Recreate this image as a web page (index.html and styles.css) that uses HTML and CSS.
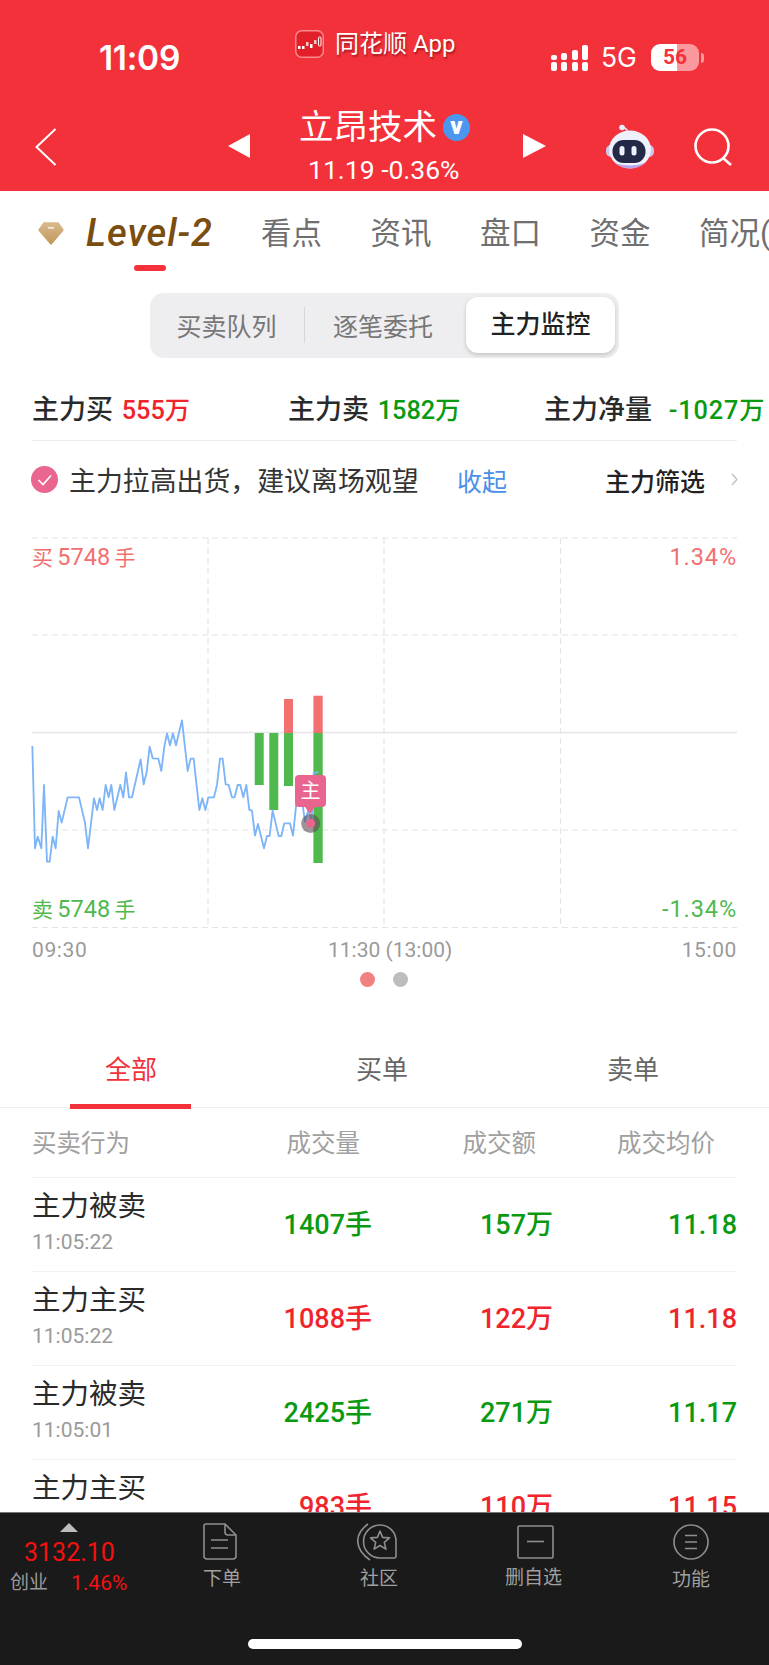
FILE: index.html
```html
<!DOCTYPE html>
<html lang="zh-CN">
<head>
  <meta charset="UTF-8" />
  <title>立昂技术</title>
  <link rel="stylesheet" href="styles.css">
</head>
<body>
  <div class="phone">
    <header class="top">
      <div class="status">
        <span class="time">11:09</span>
        <div class="app">
          <svg class="app-icon" width="29" height="28" viewBox="0 0 29 28">
            <rect x="0.75" y="0.75" width="27.5" height="26.5" rx="6" fill="#e3202a" stroke="#f98a8a" stroke-width="1.5"/>
            <rect x="3" y="16" width="2.5" height="3" fill="#fff"/>
            <rect x="7" y="16" width="2.5" height="3" fill="#fff"/>
            <rect x="11" y="12" width="2.5" height="4" fill="#f8c7c7"/>
            <rect x="15" y="14" width="2.5" height="4" fill="#fff"/>
            <rect x="19" y="10" width="2.5" height="4" fill="#f8c7c7"/>
            <rect x="23.5" y="7" width="2.5" height="9" rx="1" fill="none" stroke="#fff"/>
          </svg>
          <span class="app-name">同花顺 App</span>
        </div>
        <div class="status-right">
          <svg width="37" height="26" viewBox="0 0 37 26" fill="#fff">
            <rect x="0" y="17" width="6" height="9" rx="2"/>
            <rect x="0" y="10" width="6" height="5" rx="2"/>
            <rect x="10" y="17" width="6" height="9" rx="2"/>
            <rect x="10" y="8" width="6" height="7" rx="2"/>
            <rect x="21" y="17" width="6" height="9" rx="2"/>
            <rect x="21" y="5" width="6" height="10" rx="2"/>
            <rect x="31" y="17" width="6" height="9" rx="2"/>
            <rect x="31" y="0" width="6" height="15" rx="2"/>
          </svg>
          <span class="net">5G</span>
          <span class="battery">56</span>
          <span class="battery-tip"></span>
        </div>
      </div>
      <nav class="nav">
        <svg class="back" width="22" height="38" viewBox="0 0 22 38"><path d="M20.5 1 L1.5 19 L20.5 37" fill="none" stroke="#fff" stroke-width="2"/></svg>
        <span class="tri tri-left"></span>
        <div class="stock">
          <div class="stock-name">立昂技术<span class="verified">v</span></div>
          <div class="stock-price">11.19 -0.36%</div>
        </div>
        <span class="tri tri-right"></span>
        <svg class="robot" width="48" height="46" viewBox="0 0 48 46">
          <path d="M16 4 Q20 3 22 8" fill="none" stroke="#e4e4f8" stroke-width="1.6"/>
          <circle cx="16" cy="3.500" r="2.800" fill="#eeeefb"/>
          <rect x="0" y="21" width="48" height="12" rx="5" fill="#c9c8ee"/>
          <ellipse cx="24" cy="25.500" rx="21" ry="19" fill="#eef0fc"/>
          <path d="M9 39 Q24 50 39 39 Q24 44 9 39 Z" fill="#b9a2ec"/>
          <rect x="6.500" y="16" width="33" height="23" rx="11" fill="#232a48"/>
          <rect x="13.500" y="22" width="5" height="9.500" rx="2.500" fill="#eef0ff"/>
          <rect x="25.500" y="22" width="5" height="9.500" rx="2.500" fill="#eef0ff"/>
        </svg>
        <svg class="search" width="39" height="38" viewBox="0 0 39 38">
          <circle cx="18" cy="18" r="16.500" fill="none" stroke="#fff" stroke-width="2.600"/>
          <path d="M29 30 L37 37" stroke="#fff" stroke-width="2.600"/>
        </svg>
      </nav>
    </header>

    <main class="content">
      <div class="level-tabs">
        <div class="level-tab">
          <svg class="gem" width="26" height="23" viewBox="0 0 26 23">
            <defs>
              <linearGradient id="gemFill" x1="0" y1="0" x2="0" y2="1">
                <stop offset="0" stop-color="#d8b88c"/>
                <stop offset="1" stop-color="#c2975b"/>
              </linearGradient>
            </defs>
            <path d="M6 1 H20 L25 8 L13 22 L1 8 Z" fill="url(#gemFill)" stroke="url(#gemFill)" stroke-width="1.500" stroke-linejoin="round"/>
            <rect x="10" y="5" width="6" height="1.600" fill="#f8eedf"/>
          </svg>
          <span class="level-name">Level-2</span>
          <span class="level-mark"></span>
        </div>
        <span class="tab">看点</span>
        <span class="tab">资讯</span>
        <span class="tab">盘口</span>
        <span class="tab">资金</span>
        <span class="tab">简况(</span>
      </div>

      <div class="segment-wrap">
        <div class="segment">
          <span class="seg-item seg-first">买卖队列</span>
          <span class="seg-line"></span>
          <span class="seg-item seg-second">逐笔委托</span>
          <span class="seg-item seg-active">主力监控</span>
        </div>
      </div>

      <div class="stats">
        <div class="stat stat-buy">主力买 <b class="up">555万</b></div>
        <div class="stat stat-sell">主力卖 <b class="down">1582万</b></div>
        <div class="stat stat-net">主力净量 <b class="down">-1027万</b></div>
      </div>

      <div class="advice">
        <svg class="check" width="27" height="27" viewBox="0 0 27 27">
          <circle cx="13.5" cy="13.5" r="13.5" fill="#e9668f"/>
          <path d="M7.5 14 L12 18.5 L20 9.5" fill="none" stroke="#fff" stroke-width="1.6"/>
        </svg>
        <span class="advice-text">主力拉高出货，建议离场观望</span>
        <span class="collapse">收起</span>
        <span class="filter">主力筛选</span>
        <svg class="chev" width="7" height="13" viewBox="0 0 7 13"><path d="M1 1 L6 6.5 L1 12" fill="none" stroke="#bbb" stroke-width="1.2"/></svg>
      </div>

      <div class="chart">
        <svg class="chart-svg" width="769" height="412" viewBox="0 520 769 412">
          <g stroke="#e4e4e4" stroke-width="1.2" stroke-dasharray="6 4" fill="none">
            <path d="M32 538 H737"/>
            <path d="M32 635 H737"/>
            <path d="M32 830 H737"/>
            <path d="M32 927.5 H737"/>
            <path d="M208 538 V927"/>
            <path d="M384 538 V927"/>
            <path d="M560.500 538 V927"/>
          </g>
          <path d="M32 732.500 H737" stroke="#e6e6e6" stroke-width="1.5"/>
          <g fill="#4fb94e">
            <rect x="254.700" y="733" width="9" height="52"/>
            <rect x="269.300" y="733" width="9" height="77"/>
            <rect x="284" y="733" width="9" height="53"/>
            <rect x="313.400" y="733" width="9.300" height="130"/>
          </g>
          <g fill="#f37070">
            <rect x="284" y="699" width="9" height="34"/>
            <rect x="313.400" y="695.700" width="9.300" height="37.300"/>
          </g>
          <polyline transform="translate(0 520) scale(0.3333)" fill="none" stroke="#7db5f8" stroke-width="5.5" stroke-linejoin="round" points="97,678 105,985 113,950 124,985 132,795 141,1025 149,1025 158,950 167,985 176,873 185,908 203,832 237,832 255,908 264,985 282,835 291,870 299,835 308,870 317,795 326,832 334,795 343,870 361,795 370,832 378,757 387,832 396,832 422,718 431,793 440,757 449,680 458,715 475,716 484,753 493,680 501,640 510,676 519,640 528,676 546,601 563,753 572,716 581,716 598,870 607,835 616,870 625,832 642,832 651,795 660,716 668,716 677,793 686,795 696,832 704,832 713,795 721,795 730,832 739,795 748,870 756,872 765,947 774,912 792,985 801,948 809,948 818,872 836,948 844,948 853,910 870,910 879,947 888,860 893,832 905,832 915,905 925,870 935,905 941,760 955,755"/>
          <circle cx="310.700" cy="823.500" r="9.500" fill="#5d4c50" fill-opacity="0.6"/>
          <circle cx="310.700" cy="823.500" r="4.500" fill="#e9648f"/>
        </svg>
        <span class="chart-label label-tl"><i>买</i> 5748 <i>手</i></span>
        <span class="chart-label label-tr">1.34%</span>
        <span class="chart-label label-bl"><i>卖</i> 5748 <i>手</i></span>
        <span class="chart-label label-br">-1.34%</span>
        <span class="pin">主</span>
      </div>

      <div class="axis">
        <span class="axis-end">09:30</span>
        <span class="axis-mid">11:30 (13:00)</span>
        <span class="axis-end">15:00</span>
      </div>
      <div class="dots"><span class="dot dot-on"></span><span class="dot"></span></div>

      <div class="sub-tabs">
        <span class="sub-tab sub-on">全部</span>
        <span class="sub-tab">买单</span>
        <span class="sub-tab">卖单</span>
      </div>

      <div class="list">
        <div class="list-head">
          <span>买卖行为</span>
          <span class="head-cell head-vol">成交量</span>
          <span class="head-cell head-amt">成交额</span>
          <span class="head-cell head-price">成交均价</span>
        </div>
        <div class="list-row">
          <div><div class="act">主力被卖</div><div class="when">11:05:22</div></div>
          <span class="num down">1407手</span><span class="num down">157万</span><span class="num down">11.18</span>
        </div>
        <div class="list-row">
          <div><div class="act">主力主买</div><div class="when">11:05:22</div></div>
          <span class="num up">1088手</span><span class="num up">122万</span><span class="num up">11.18</span>
        </div>
        <div class="list-row">
          <div><div class="act">主力被卖</div><div class="when">11:05:01</div></div>
          <span class="num down">2425手</span><span class="num down">271万</span><span class="num down">11.17</span>
        </div>
        <div class="list-row">
          <div><div class="act">主力主买</div><div class="when"></div></div>
          <span class="num up">983手</span><span class="num up">110万</span><span class="num up">11.15</span>
        </div>
      </div>
    </main>

    <footer class="bottom">
      <div class="bottom-bar">
        <div class="index">
          <span class="index-tri"></span>
          <div class="index-value">3132.10</div>
          <div class="index-line"><span class="index-name">创业</span><span class="index-pct">1.46%</span></div>
        </div>
        <div class="action action-order">
          <svg width="34" height="37" viewBox="0 0 34 37" fill="none" stroke="#8e8e8e" stroke-width="1.600">
            <path d="M3 1 H22 L33 12 V33 Q33 36 30 36 H4 Q1 36 1 33 V3 Q1 1 3 1 Z"/>
            <path d="M22 1 V9 Q22 12 25 12 H33"/>
            <path d="M8 17 H25 M8 25 H25"/>
          </svg>
          <span>下单</span>
        </div>
        <div class="action action-social">
          <svg width="40" height="38" viewBox="0 0 40 38" fill="none" stroke="#8e8e8e" stroke-width="1.600">
            <path d="M11 1 C-3 11 -3 26 13 37"/>
            <path d="M23 2 A16 16 0 0 1 39 18 V33 Q39 35 37 35 H23 A16.500 16.500 0 0 1 23 2 Z"/>
            <path d="M23 8 L25.600 14.400 L32.500 14.900 L27.300 19.400 L28.900 26.100 L23 22.500 L17.100 26.100 L18.700 19.400 L13.500 14.900 L20.400 14.400 Z" stroke-linejoin="round"/>
          </svg>
          <span>社区</span>
        </div>
        <div class="action action-del">
          <svg width="37" height="34" viewBox="0 0 37 34" fill="none" stroke="#8e8e8e" stroke-width="1.600">
            <rect x="1" y="1" width="35" height="32" rx="1.500"/>
            <path d="M10 16.500 H27"/>
          </svg>
          <span>删自选</span>
        </div>
        <div class="action action-more">
          <svg width="36" height="36" viewBox="0 0 36 36" fill="none" stroke="#8e8e8e" stroke-width="1.600">
            <circle cx="18" cy="18" r="17"/>
            <path d="M12 11.500 H24 M12 18 H24 M12 24.500 H24"/>
          </svg>
          <span>功能</span>
        </div>
      </div>
      <div class="home-bar"></div>
    </footer>
  </div>
</body>
</html>
```

FILE: styles.css
```css
* {
  box-sizing: border-box;
}
html, body {
  margin: 0;
  padding: 0;
  background: #fff;
}
body {
  font-family: Roboto, "Noto Sans CJK SC", sans-serif;
  color: #333;
}
.phone {
  width: 769px;
  height: 1665px;
  display: flex;
  flex-direction: column;
  overflow: hidden;
}
.up {
  color: #f0242c;
}
.down {
  color: #0a9a12;
}

/* red header */
.top {
  height: 191px;
  background: #f3313b;
  color: #fff;
  flex: none;
}
.status {
  height: 100px;
  display: flex;
  align-items: flex-start;
  padding-left: 99px;
}
.time {
  width: 196px;
  margin-top: 39px;
  font-family: Inter, sans-serif;
  font-size: 33.500px;
  line-height: 38px;
  font-weight: 600;
  letter-spacing: -.3px;
}
.app {
  width: 256px;
  margin-top: 30px;
  display: flex;
  align-items: center;
  gap: 11px;
}
.app-name {
  font-size: 24px;
  line-height: 28px;
  text-shadow: 1px 2px 2px rgba(90, 0, 0, .5);
}
.status-right {
  margin-top: 44px;
  display: flex;
  align-items: center;
}
.net {
  margin-left: 13px;
  width: 50px;
  font-family: Inter, sans-serif;
  font-size: 26.500px;
  line-height: 27px;
}
.battery {
  width: 48px;
  height: 27px;
  border-radius: 9px;
  background: linear-gradient(90deg, #fff 54%, rgba(255, 255, 255, .5) 54%);
  color: #f3313b;
  font-size: 21px;
  font-weight: 700;
  line-height: 27px;
  text-align: center;
}
.battery-tip {
  width: 3px;
  height: 10px;
  margin-left: 2px;
  border-radius: 0 3px 3px 0;
  background: rgba(255, 255, 255, .5);
}
.nav {
  height: 91px;
  display: flex;
  align-items: flex-start;
  padding-left: 35px;
}
.back {
  margin-top: 28px;
}
.tri {
  width: 0;
  height: 0;
  margin-top: 34px;
  border-top: 12.5px solid transparent;
  border-bottom: 12.5px solid transparent;
}
.tri-left {
  margin-left: 171px;
  border-right: 22px solid #fff;
}
.tri-right {
  border-left: 23px solid #fff;
}
.stock {
  width: 273px;
  padding-left: 49px;
}
.stock-name {
  display: flex;
  align-items: center;
  height: 46px;
  margin-top: 4px;
  font-size: 34.500px;
  line-height: 46px;
}
.verified {
  width: 27px;
  height: 27px;
  margin-left: 6px;
  border-radius: 50%;
  background: #4b97f0;
  font-size: 24px;
  font-weight: 900;
  line-height: 24px;
  text-align: center;
}
.stock-price {
  margin-top: 5px;
  margin-left: 9px;
  font-size: 26.500px;
  line-height: 30px;
}
.robot {
  margin-left: 60px;
  margin-top: 24px;
}
.search {
  margin-left: 40px;
  margin-top: 28px;
}

.content {
  flex: 1;
  min-height: 0;
  overflow: hidden;
}

/* level tabs */
.level-tabs {
  height: 80px;
  display: flex;
  align-items: flex-start;
  white-space: nowrap;
}
.level-tab {
  position: relative;
  flex: none;
  width: 261px;
  height: 80px;
  padding: 20px 0 0 38px;
  display: flex;
  align-items: flex-start;
}
.gem {
  margin-top: 11px;
}
.level-name {
  margin-left: 22px;
  font-family: Roboto, sans-serif;
  font-size: 38px;
  font-style: italic;
  font-weight: 500;
  letter-spacing: 1px;
  line-height: 44px;
  color: #7a4d10;
}
.level-mark {
  position: absolute;
  left: 134px;
  top: 74px;
  width: 32px;
  height: 6px;
  border-radius: 3px;
  background: #f5323b;
}
.tab {
  flex: none;
  margin-top: 21px;
  width: 109.500px;
  font-size: 30.500px;
  line-height: 44px;
  color: #6f6f6f;
}

/* segment */
.segment-wrap {
  margin-top: 22px;
  display: flex;
  justify-content: center;
}
.segment {
  width: 469px;
  height: 65px;
  margin-left: -1px;
  padding: 4px 3px 5px 27px;
  display: flex;
  align-items: center;
  border-radius: 14px;
  background: #eeeef0;
  font-size: 25px;
  color: #777;
}
.seg-first {
  width: 127px;
  flex: none;
}
.seg-line {
  flex: none;
  width: 1.500px;
  height: 36px;
  background: #d6d6d8;
}
.seg-second {
  flex: none;
  margin-left: 28px;
  width: 133px;
}
.seg-active {
  flex: none;
  width: 149px;
  height: 56px;
  line-height: 56px;
  text-align: center;
  border-radius: 12px;
  background: #fff;
  box-shadow: 0 2px 4px rgba(0, 0, 0, .18);
  color: #222;
  font-weight: 500;
}

/* stats */
.stats {
  height: 83px;
  margin: 0 32px;
  padding-top: 16px;
  display: flex;
  align-items: center;
  white-space: nowrap;
  border-bottom: 1.500px solid #ececec;
  font-size: 27px;
  font-weight: 500;
  color: #2a2a2a;
}
.stat {
  flex: none;
}
.stat b {
  font-size: 25.300px;
  font-weight: 500;
  margin-left: 2px;
}
.stat-buy {
  width: 256px;
}
.stat-sell {
  width: 256px;
}
.stat-net b {
  margin-left: 10px;
  letter-spacing: .9px;
}

/* advice */
.advice {
  height: 77px;
  padding-left: 31px;
  display: flex;
  align-items: center;
  white-space: nowrap;
}
.advice-text {
  flex: none;
  margin-left: 11px;
  width: 388px;
  font-size: 26.900px;
  color: #333;
}
.collapse {
  flex: none;
  width: 148px;
  font-size: 25px;
  color: #4a90e8;
}
.filter {
  flex: none;
  width: 126px;
  font-size: 25px;
  font-weight: 500;
  color: #222;
}

/* chart */
.chart {
  position: relative;
  height: 414px;
  padding-top: 2px;
}
.chart-svg {
  display: block;
}
.chart-label {
  position: absolute;
  font-size: 23.500px;
  word-spacing: -1.500px;
  line-height: 28px;
  white-space: nowrap;
}
.chart-label i {
  font-style: normal;
  font-size: 21px;
}
.label-tl {
  left: 32px;
  top: 25px;
  color: #f27070;
}
.label-tr {
  right: 32px;
  top: 25px;
  letter-spacing: .9px;
  color: #f27070;
}
.label-bl {
  left: 32px;
  top: 377px;
  color: #4fb94e;
}
.label-br {
  right: 32px;
  top: 377px;
  letter-spacing: .9px;
  color: #4fb94e;
}
.pin {
  position: absolute;
  left: 295px;
  top: 257px;
  width: 31px;
  height: 32px;
  border-radius: 4px;
  background: #e9648f;
  color: #fff;
  font-size: 20px;
  line-height: 32px;
  text-align: center;
}
.pin::after {
  content: "";
  position: absolute;
  left: 10px;
  top: 32px;
  border-left: 5.500px solid transparent;
  border-right: 5.500px solid transparent;
  border-top: 7px solid #e9648f;
}
.axis {
  position: relative;
  height: 36px;
  padding: 4px 32px 0;
  display: flex;
  justify-content: space-between;
  font-size: 21px;
  line-height: 28px;
  color: #9a9a9a;
}
.axis-end {
  letter-spacing: .6px;
}
.axis-mid {
  position: absolute;
  left: 328px;
}
.dots {
  height: 38px;
  padding: 4px 0 0 360px;
  display: flex;
  gap: 18px;
}
.dot {
  width: 15px;
  height: 15px;
  border-radius: 50%;
  background: #bdbdbd;
}
.dot-on {
  background: #f38080;
}

/* list tabs */
.sub-tabs {
  height: 84px;
  margin-top: 18px;
  padding: 0 6px;
  display: grid;
  grid-template-columns: repeat(3, 251px);
  border-bottom: 1.500px solid #eeeeee;
}
.sub-tab {
  position: relative;
  padding-top: 26px;
  margin-left: -1px;
  font-size: 26px;
  line-height: 40px;
  text-align: center;
  color: #666;
}
.sub-on {
  color: #f3313b;
}
.sub-on::after {
  content: "";
  position: absolute;
  left: 65px;
  bottom: -1.500px;
  width: 121px;
  height: 4.500px;
  background: #f3313b;
}

/* list */
.list {
  padding: 0 32px;
}
.list-head, .list-row {
  display: grid;
  grid-template-columns: 220px 120px 181px 184px;
  align-items: center;
  border-bottom: 1.500px solid #f3f3f3;
}
.list-head {
  height: 70px;
  padding-top: 2px;
  font-size: 24.500px;
  line-height: 36px;
  color: #a0a0a0;
}
.list-row {
  height: 94px;
}
.num, .head-cell {
  text-align: right;
  white-space: nowrap;
}
.num {
  font-size: 27px;
  line-height: 36px;
  font-weight: 500;
}
.head-vol {
  padding-right: 12px;
}
.head-amt {
  padding-right: 17px;
}
.head-price {
  padding-right: 22px;
}
.act {
  margin-top: -4px;
  margin-bottom: 1px;
  font-size: 28.500px;
  line-height: 38px;
  color: #2a2a2a;
}
.when {
  min-height: 30px;
  font-size: 21px;
  line-height: 30px;
  color: #9a9a9a;
}

/* bottom bar */
.bottom {
  height: 153px;
  flex: none;
  background: #1a1a1a;
  border-top: 1.500px solid #777;
}
.bottom-bar {
  height: 115px;
  display: flex;
  align-items: flex-start;
}
.index {
  flex: none;
  width: 140px;
  height: 100%;
  position: relative;
  padding-top: 25px;
}
.index-tri {
  display: block;
  width: 0;
  height: 0;
  margin-left: 60px;
  border-left: 9px solid transparent;
  border-right: 9px solid transparent;
  border-bottom: 9px solid #bdbdbd;
  position: absolute;
  top: 10px;
}
.index-value {
  margin-left: 24px;
  font-size: 25px;
  line-height: 30px;
  color: #f51010;
}
.index-line {
  margin-top: 0;
  margin-left: 10px;
  display: flex;
  align-items: center;
}
.index-name {
  width: 61px;
  font-size: 19px;
  line-height: 30px;
  color: #999;
}
.index-pct {
  font-size: 21px;
  line-height: 30px;
  color: #f51010;
}
.action {
  display: flex;
  flex-direction: column;
  align-items: center;
  color: #a0a0a0;
  font-size: 19px;
  line-height: 26px;
}
.action svg {
  display: block;
  margin-bottom: 6px;
}
.action-order {
  margin-top: 10px;
  margin-left: 63px;
}
.action-order svg {
  margin-left: -4px;
}
.action-social {
  margin-top: 10px;
  margin-left: 119px;
}
.action-social svg {
  margin-left: -4px;
  margin-bottom: 5px;
}
.action-del {
  margin-top: 12px;
  margin-left: 107px;
}
.action-del svg {
  margin-left: 3px;
}
.action-more {
  margin-top: 11px;
  margin-left: 110px;
}
.action-more svg {
  margin-bottom: 7px;
}
.home-bar {
  width: 274px;
  height: 10px;
  margin: 10.500px 0 0 248px;
  border-radius: 5px;
  background: #fff;
}
```
